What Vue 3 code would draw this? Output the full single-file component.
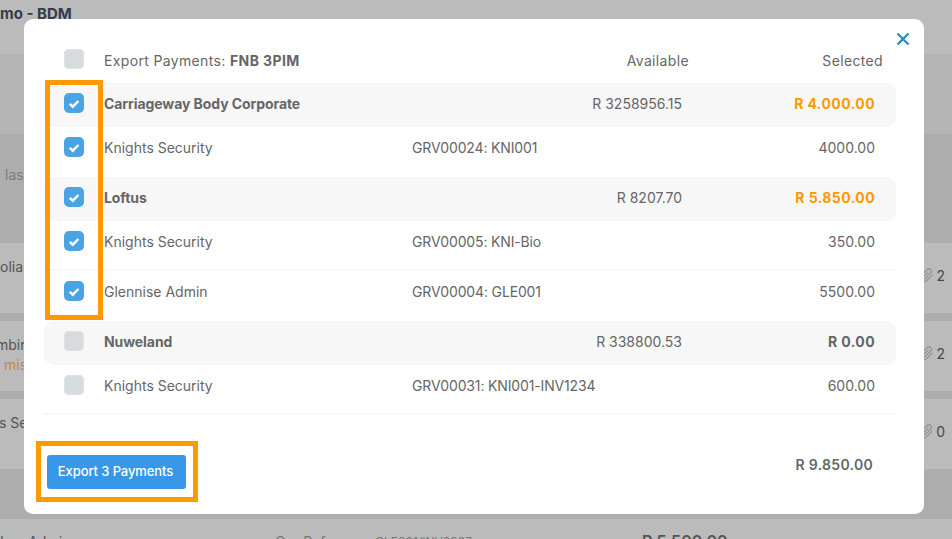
<template>
  <div class="page">
    <div class="bg">
      <div class="bg-head"><span class="bg-title">mo - BDM</span></div>
      <div class="bg-strip"></div>
      <div class="bg-mid"><span class="bg-note">last</span></div>
      <div v-for="row in bgRows" :key="row.text" class="bg-row">
        <div class="bg-left">
          <div class="bg-text" :style="{ marginLeft: row.offset + 'px' }">{{ row.text }}</div>
          <div v-if="row.warn" class="bg-warn">{{ row.warn }}</div>
        </div>
        <span class="clip">
          <svg class="clip-ico" viewBox="0 0 24 24"><path d="M21.440 11.050l-9.190 9.190a6 6 0 0 1-8.490-8.490l9.190-9.190a4 4 0 0 1 5.660 5.660l-9.200 9.190a2 2 0 0 1-2.830-2.830l8.490-8.480" /></svg>
          {{ row.count }}
        </span>
      </div>
      <div class="bg-gap"></div>
      <div class="bg-tail">
        <span class="tail-a">Lee Admin</span>
        <span class="tail-b">Our Ref</span>
        <span class="tail-c">GLE001/INV0987</span>
        <span class="tail-d">R 5.500.00</span>
      </div>
    </div>

    <div class="modal">
      <button class="close" aria-label="Close">
        <svg viewBox="0 0 14 14" width="14" height="14"><path d="M1.500 1.500l11 11M12.500 1.500l-11 11" /></svg>
      </button>

      <div class="row head">
        <span class="box"></span>
        <span class="name">Export Payments: <b>FNB 3PIM</b></span>
        <span class="avail">Available</span>
        <span class="sel">Selected</span>
      </div>

      <template v-for="group in groups" :key="group.name">
        <div class="row group">
          <span class="box" :class="{ on: group.checked }"><svg v-if="group.checked" viewBox="0 0 20 20"><path d="M5.800 10.800l3 2.900 5.600-5.700" /></svg></span>
          <span class="name">{{ group.name }}</span>
          <span class="avail">{{ group.available }}</span>
          <span class="sel" :class="{ hot: group.checked }">{{ group.selected }}</span>
        </div>
        <div v-for="item in group.items" :key="item.ref" class="row item" :class="{ line: item.line }">
          <span class="box" :class="{ on: item.checked }"><svg v-if="item.checked" viewBox="0 0 20 20"><path d="M5.800 10.800l3 2.900 5.600-5.700" /></svg></span>
          <span class="name">{{ item.name }}</span>
          <span class="ref">{{ item.ref }}</span>
          <span class="amount">{{ item.amount }}</span>
        </div>
      </template>

      <div class="foot">
        <button class="export">Export 3 Payments</button>
        <span class="total">R 9.850.00</span>
      </div>

      <div class="mark mark-boxes"></div>
      <div class="mark mark-btn"></div>
    </div>
  </div>
</template>

<script setup>
const bgRows = [
  { text: 'olia', offset: 0, count: 2 },
  { text: 'mbir', offset: -4, warn: 'e misi', count: 2 },
  { text: 's Se', offset: -1, count: 0 }
]

const groups = [
  {
    name: 'Carriageway Body Corporate',
    available: 'R 3258956.15',
    selected: 'R 4.000.00',
    checked: true,
    items: [{ name: 'Knights Security', ref: 'GRV00024: KNI001', amount: '4000.00', checked: true }]
  },
  {
    name: 'Loftus',
    available: 'R 8207.70',
    selected: 'R 5.850.00',
    checked: true,
    items: [
      { name: 'Knights Security', ref: 'GRV00005: KNI-Bio', amount: '350.00', checked: true, line: true },
      { name: 'Glennise Admin', ref: 'GRV00004: GLE001', amount: '5500.00', checked: true }
    ]
  },
  {
    name: 'Nuweland',
    available: 'R 338800.53',
    selected: 'R 0.00',
    checked: false,
    items: [{ name: 'Knights Security', ref: 'GRV00031: KNI001-INV1234', amount: '600.00', checked: false, line: true }]
  }
]
</script>

<style>
html, body { margin: 0; overflow: hidden; }
</style>

<style scoped>
.page {
  position: relative;
  width: 952px;
  height: 539px;
  overflow: hidden;
  font-family: Inter, "Noto Sans", sans-serif;
  font-size: 14px;
  color: #666;
}

/* dimmed page behind the modal */
.bg { height: 100%; background: #adadad; display: flex; flex-direction: column; }
.bg-head { height: 54px; flex: none; background: #bbb; padding-top: 4px; box-sizing: border-box; white-space: nowrap; }
.bg-title { font-size: 15px; font-weight: 700; color: #333c4d; }
.bg-strip { height: 80px; flex: none; background: #b4b4b4; }
.bg-mid { height: 109px; flex: none; padding: 32px 0 0 5px; box-sizing: border-box; background: #adadad; line-height: 17px; }
.bg-note { color: #7d7d7d; }
.bg-row {
  display: flex;
  justify-content: space-between;
  flex: none;
  height: 70px;
  margin-bottom: 8px;
  background: #bbb;
}
.bg-left { padding-top: 15px; line-height: 17px; white-space: nowrap; }
.bg-text { color: #555; }
.bg-warn { margin-top: 3px; margin-left: -8px; color: #c08a3a; }
.clip { display: flex; align-items: center; gap: 2px; margin: 0 7px 5px 0; color: #484848; font-size: 14px; }
.clip-ico { width: 15px; height: 15px; fill: none; stroke: #8f8f8f; stroke-width: 1.800; }
.bg-gap { height: 42px; flex: none; }
.bg-tail { position: relative; flex: 1; background: #bbb; white-space: nowrap; color: #555; line-height: 17px; }
.bg-tail span { position: absolute; top: 14px; }
.tail-a { left: 0; }
.tail-b { left: 275px; color: #777; }
.tail-c { left: 375px; color: #777; font-size: 12px; }
.tail-d { left: 642px; font-weight: 600; font-size: 16px; }

.modal {
  position: absolute;
  left: 24px;
  top: 19px;
  width: 900px;
  height: 495px;
  box-sizing: border-box;
  padding: 18px 28px 0 20px;
  background: #fff;
  border-radius: 9px;
  display: flex;
  flex-direction: column;
}
.close {
  position: absolute;
  right: 14px;
  top: 13px;
  padding: 0;
  border: 0;
  background: none;
  line-height: 0;
}
.close path { fill: none; stroke: #2f8fb0; stroke-width: 2.400; }

.row {
  display: flex;
  align-items: center;
  flex: none;
  height: 44px;
  box-sizing: border-box;
  padding: 0 21px 4px 20px;
  white-space: nowrap;
}
.head { height: 46px; padding: 0 13px 0 20px; letter-spacing: 0.35px; }
.head .box { margin-bottom: 2px; }
.head .sel { width: 194px; }
.group { background: #f7f7f7; border-radius: 10px; }
.group .name, .group .sel { font-weight: 700; }
.group .name { letter-spacing: -0.08px; }
.item { height: 50px; padding-bottom: 10px; }
.item.line { padding-bottom: 8px; border-bottom: 2px solid #f7f7f7; }
.name { margin-left: 20px; width: 308px; flex: none; }
.name b { font-weight: 700; letter-spacing: 0.4px; }
.ref { letter-spacing: -0.15px; }
.avail { margin-left: auto; }
.sel { width: 193px; text-align: right; }
.group .sel { letter-spacing: 0.4px; }
.amount { margin-left: auto; }
.hot { color: #f90; }

.box {
  flex: none;
  width: 20px;
  height: 20px;
  border-radius: 5px;
  background: #d6dcde;
  box-shadow: inset 0 0 0 1px #dfe3e5;
}
.box.on { background: #4aa3e3; box-shadow: none; }
.box svg { display: block; width: 20px; height: 20px; fill: none; stroke: #fff; stroke-width: 2.400; }

.foot {
  display: flex;
  justify-content: space-between;
  padding: 40px 23px 0 3px;
}
.export {
  width: 139px;
  height: 34px;
  padding: 0 2px 2px 0;
  border: 0;
  border-radius: 3px;
  background: #3897e6;
  color: #fff;
  font: 500 13px Inter, "Noto Sans", sans-serif;
  letter-spacing: -0.1px;
}
.total { margin-top: 1px; font-weight: 600; line-height: 18px; letter-spacing: 0.3px; }

.mark { position: absolute; border: 5px solid #f90; box-sizing: border-box; pointer-events: none; }
.mark-boxes { left: 21px; top: 61px; width: 58px; height: 240px; }
.mark-btn { left: 12px; top: 422px; width: 162px; height: 61px; }
</style>
